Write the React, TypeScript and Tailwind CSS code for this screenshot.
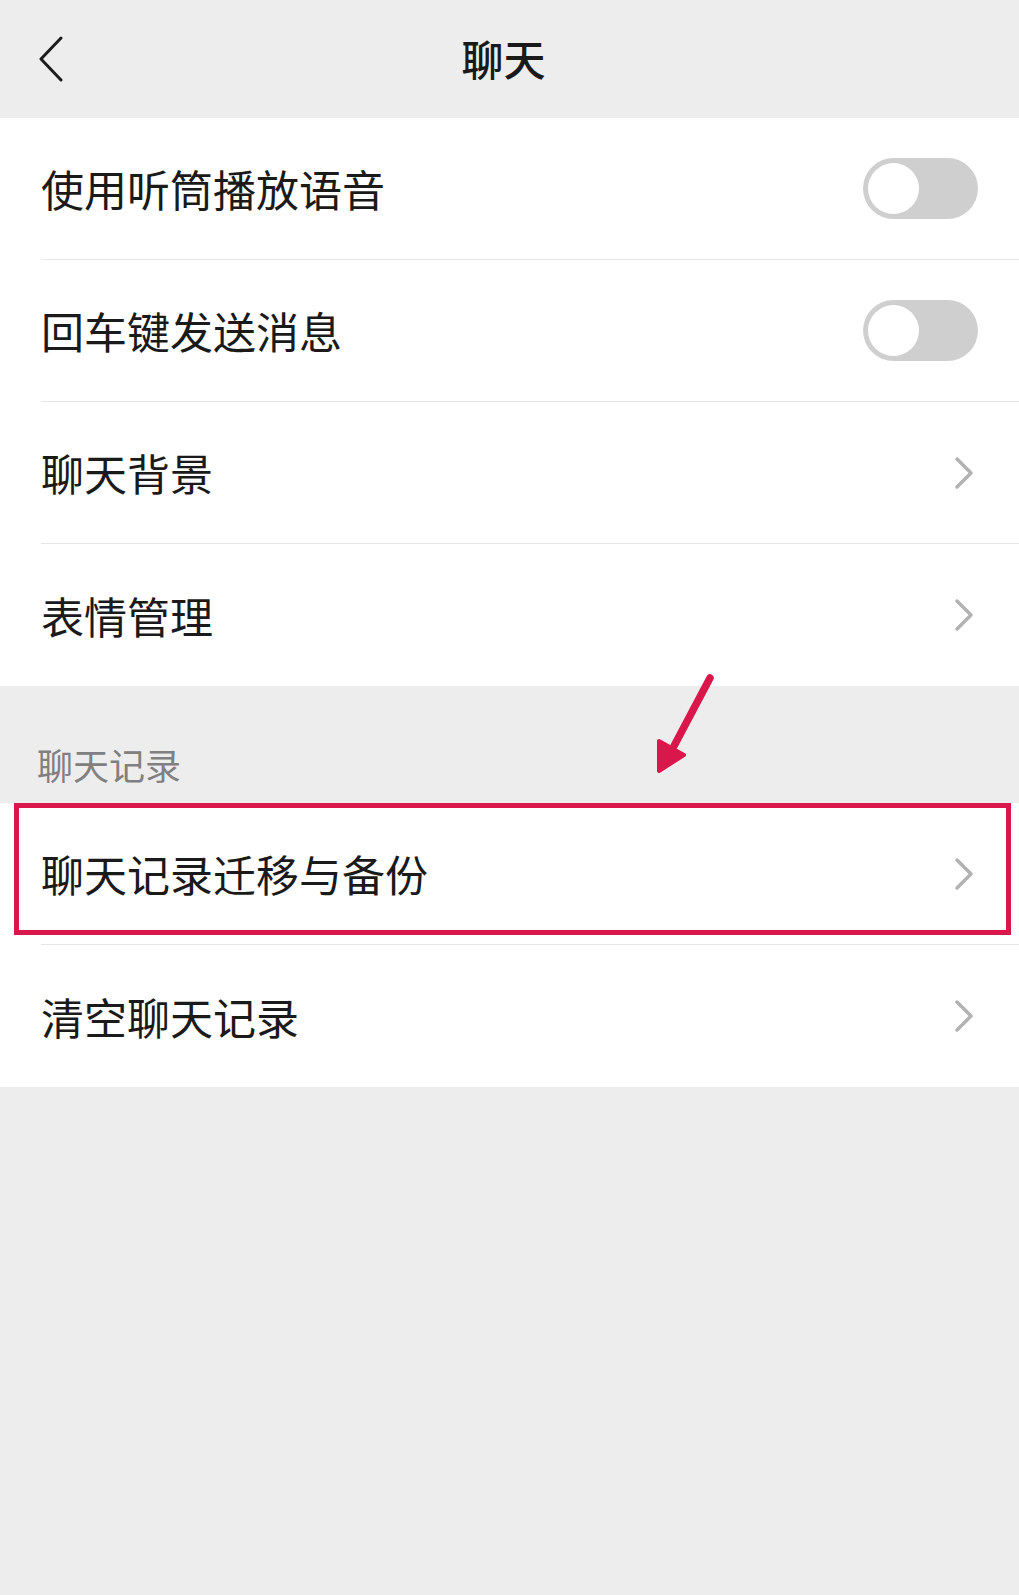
import React from 'react'

const font = { fontFamily: '"Noto Sans CJK SC", "Noto Sans", sans-serif' }

function BackIcon() {
  return (
    <svg width="26" height="46" viewBox="0 0 26 46" fill="none" className="shrink-0">
      <polyline points="23,2 3,23 23,44" stroke="#1c1c1c" strokeWidth="3" strokeLinecap="round" strokeLinejoin="round" />
    </svg>
  )
}

function Chevron() {
  return (
    <svg width="20" height="34" viewBox="0 0 20 34" fill="none" className="shrink-0">
      <polyline points="3,3 17,17 3,31" stroke="#b2b2b2" strokeWidth="3.5" strokeLinecap="round" strokeLinejoin="round" />
    </svg>
  )
}

function Toggle() {
  return (
    <span className="flex items-center w-[115px] h-[61px] rounded-full bg-[#cfcfcf] shrink-0">
      <span className="ml-[5px] w-[51px] h-[51px] rounded-full bg-white" />
    </span>
  )
}

type Row = { label: string; kind: 'toggle' | 'link' }

function SettingRow({ row, last, children }: { row: Row; last?: boolean; children?: React.ReactNode }) {
  return (
    <div className="relative h-[142px] bg-white pl-[41px]">
      <div className={`h-full flex items-center justify-between ${last ? '' : 'border-b border-[#e6e6e6]'}`}>
        <span className="text-[43px] leading-none text-[#1a1a1a]">{row.label}</span>
        {row.kind === 'toggle' ? (
          <span className="mr-[41px]"><Toggle /></span>
        ) : (
          <span className="mr-[45px]"><Chevron /></span>
        )}
      </div>
      {children}
    </div>
  )
}

const general: Row[] = [
  { label: '使用听筒播放语音', kind: 'toggle' },
  { label: '回车键发送消息', kind: 'toggle' },
  { label: '聊天背景', kind: 'link' },
  { label: '表情管理', kind: 'link' },
]

export default function App() {
  return (
    <div className="relative min-h-[1595px] bg-[#ededed]" style={font}>
      <header className="h-[118px] flex items-center pl-[38px]">
        <BackIcon />
        <h1 className="flex-1 text-center pr-[76px] pb-[4px] text-[42px] font-medium text-[#1a1a1a]">聊天</h1>
      </header>

      <section>
        {general.map((row, i) => (
          <SettingRow key={row.label} row={row} last={i === general.length - 1} />
        ))}
      </section>

      <div className="h-[117px] pl-[37px] pt-[50px]">
        <span className="block leading-[56px] text-[36px] text-[#808080]">聊天记录</span>
      </div>

      <section>
        <SettingRow row={{ label: '聊天记录迁移与备份', kind: 'link' }}>
          {/* highlight frame */}
          <div className="absolute top-0 left-[14px] right-[8px] bottom-[10px] border-[5px] border-[#d9174a] pointer-events-none" />
        </SettingRow>
        <SettingRow row={{ label: '清空聊天记录', kind: 'link' }} last />
      </section>

      {/* pointer arrow */}
      <svg className="absolute left-[640px] top-[660px]" width="90" height="120" viewBox="0 0 90 120" fill="none">
        <line x1="70" y1="18" x2="34" y2="86" stroke="#d9174a" strokeWidth="7.5" strokeLinecap="round" />
        <polygon points="19,81 44,95 19,111" fill="#d9174a" stroke="#d9174a" strokeWidth="4" strokeLinejoin="round" />
      </svg>
    </div>
  )
}
